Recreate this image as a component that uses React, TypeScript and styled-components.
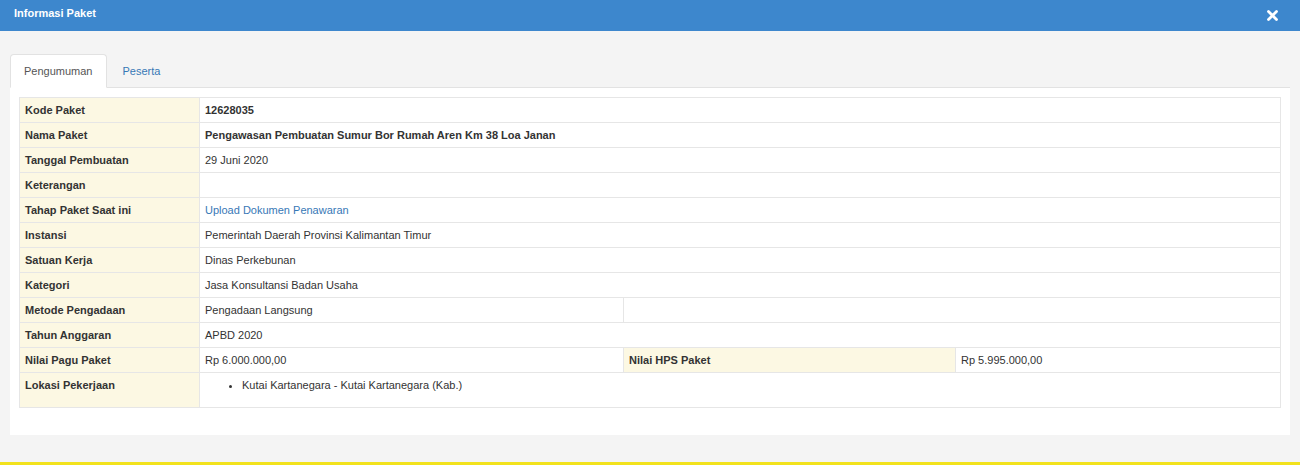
import React from "react";
import styled, { createGlobalStyle } from "styled-components";

const GlobalStyle = createGlobalStyle`
  html, body {
    margin: 0;
    padding: 0;
    background: #f4f4f4;
    font-family: "Liberation Sans", Arial, sans-serif;
    font-size: 11px;
    color: #333;
  }
  * { box-sizing: border-box; }
`;

const Modal = styled.div`
  width: 1300px;
  background: #f4f4f4;
  border-bottom: 3px solid #f2e21c;
`;

const Header = styled.div`
  height: 31px;
  background: #3d87cd;
  display: flex;
  align-items: flex-start;
  justify-content: space-between;
  padding: 7px 22px 0 14px;
`;

const Title = styled.h4`
  margin: 0;
  font-size: 11px;
  font-weight: bold;
  color: #fff;
  line-height: 13px;
`;

const CloseButton = styled.button`
  border: none;
  background: transparent;
  padding: 0;
  display: flex;
  align-items: center;
  cursor: pointer;
  margin-top: 3px;
`;

const Body = styled.div`
  padding: 23px 10px 27px 10px;
`;

const TabList = styled.ul`
  list-style: none;
  margin: 0;
  padding: 0;
  display: flex;
  border-bottom: 1px solid #e2e2e2;
`;

const Tab = styled.li<{ $active?: boolean }>`
  height: 34px;
  margin-right: 2px;
  margin-bottom: -1px;
  padding: 0 13px;
  display: flex;
  align-items: center;
  border: 1px solid ${(p) => (p.$active ? "#e2e2e2" : "transparent")};
  border-bottom-color: ${(p) => (p.$active ? "#fff" : "transparent")};
  border-radius: 4px 4px 0 0;
  background: ${(p) => (p.$active ? "#fff" : "transparent")};
  color: ${(p) => (p.$active ? "#555" : "#3778b6")};
  font-size: 11px;
  cursor: pointer;
`;

const Panel = styled.div`
  background: #fff;
  padding: 9px 9px 27px 9px;
`;

const Table = styled.table`
  width: 100%;
  border-collapse: collapse;
  table-layout: fixed;
  border: 1px solid #e0e0e0;
`;

const Label = styled.th`
  background: #fcf8e3;
  font-weight: bold;
  text-align: left;
  padding: 5px 5px;
  line-height: 14px;
  border: 1px solid #e6e6e6;
  vertical-align: top;
  color: #333;
`;

const Value = styled.td<{ $strong?: boolean }>`
  padding: 5px 5px;
  line-height: 14px;
  border: 1px solid #e6e6e6;
  vertical-align: top;
  font-weight: ${(p) => (p.$strong ? "bold" : "normal")};
  color: #333;
`;

const Link = styled.a`
  color: #3778b6;
  text-decoration: none;
`;

const List = styled.ul`
  margin: 0 0 10px 0;
  padding-left: 37px;
  line-height: 14px;
`;

const CloseIcon = () => (
  <svg width="11" height="11" viewBox="0 0 11 11">
    <path d="M1.5 1.5 L9.5 9.5 M9.5 1.5 L1.5 9.5" stroke="#fff" strokeWidth="2.8" strokeLinecap="round" />
  </svg>
);

type Row = { label: string; value?: React.ReactNode; strong?: boolean };

const rows: Row[] = [
  { label: "Kode Paket", value: "12628035", strong: true },
  { label: "Nama Paket", value: "Pengawasan Pembuatan Sumur Bor Rumah Aren Km 38 Loa Janan", strong: true },
  { label: "Tanggal Pembuatan", value: "29 Juni 2020" },
  { label: "Keterangan", value: "" },
  { label: "Tahap Paket Saat ini", value: <Link href="#">Upload Dokumen Penawaran</Link> },
  { label: "Instansi", value: "Pemerintah Daerah Provinsi Kalimantan Timur" },
  { label: "Satuan Kerja", value: "Dinas Perkebunan" },
  { label: "Kategori", value: "Jasa Konsultansi Badan Usaha" },
];

export default function App() {
  return (
    <>
      <GlobalStyle />
      <Modal>
        <Header>
          <Title>Informasi Paket</Title>
          <CloseButton aria-label="close">
            <CloseIcon />
          </CloseButton>
        </Header>
        <Body>
          <TabList>
            <Tab $active>Pengumuman</Tab>
            <Tab>Peserta</Tab>
          </TabList>
          <Panel>
            <Table>
              <colgroup>
                <col style={{ width: 180 }} />
                <col style={{ width: 424 }} />
                <col style={{ width: 332 }} />
                <col />
              </colgroup>
              <tbody>
                {rows.map((r) => (
                  <tr key={r.label}>
                    <Label>{r.label}</Label>
                    <Value colSpan={3} $strong={r.strong}>
                      {r.value}
                    </Value>
                  </tr>
                ))}
                <tr>
                  <Label>Metode Pengadaan</Label>
                  <Value>Pengadaan Langsung</Value>
                  <Value colSpan={2} />
                </tr>
                <tr>
                  <Label>Tahun Anggaran</Label>
                  <Value colSpan={3}>APBD 2020</Value>
                </tr>
                <tr>
                  <Label>Nilai Pagu Paket</Label>
                  <Value>Rp 6.000.000,00</Value>
                  <Label>Nilai HPS Paket</Label>
                  <Value>Rp 5.995.000,00</Value>
                </tr>
                <tr>
                  <Label>Lokasi Pekerjaan</Label>
                  <Value colSpan={3}>
                    <List>
                      <li>Kutai Kartanegara - Kutai Kartanegara (Kab.)</li>
                    </List>
                  </Value>
                </tr>
              </tbody>
            </Table>
          </Panel>
        </Body>
      </Modal>
    </>
  );
}
